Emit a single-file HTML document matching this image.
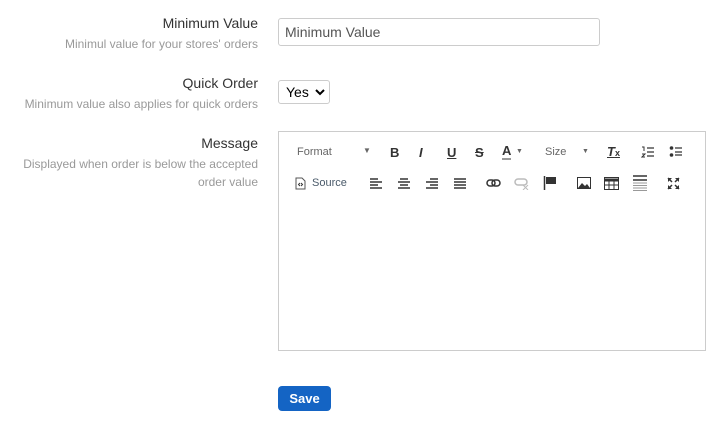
<!DOCTYPE html>
<html><head><style>
body{margin:0;background:#fff;font-family:"Liberation Sans",Arial,sans-serif;width:721px;height:432px;position:relative;overflow:hidden}
.a{position:absolute}
.t{right:463px;text-align:right;font-size:14px;color:#333;white-space:nowrap}
.d{right:463px;text-align:right;font-size:12px;color:#999;line-height:18px}
.i{color:#333;font-size:13px;font-weight:bold}
.g{color:#666;font-size:11px}
</style></head><body>
<div class="a t" style="top:15px">Minimum Value</div>
<div class="a d" style="top:35px;white-space:nowrap">Minimul value for your stores' orders</div>
<div class="a" style="left:278px;top:18px;width:322px;height:28px;border:1px solid #ccc;border-radius:3px;box-sizing:border-box;font-size:14px;color:#555;padding:5px 6px">Minimum Value</div>

<div class="a t" style="top:75px">Quick Order</div>
<div class="a d" style="top:95px;white-space:nowrap">Minimum value also applies for quick orders</div>
<div class="a" style="left:278px;top:80px;width:52px;height:24px;border:1px solid #ccc;border-radius:3px;box-sizing:border-box;font-size:14px;color:#000;padding:3px 0 0 7px;white-space:nowrap">Yes</div>
<svg class="a" style="left:315px;top:88px" width="10" height="8" viewBox="0 0 10 8"><path d="M1 2l4 4 4-4" stroke="#000" stroke-width="2" fill="none"/></svg>

<div class="a t" style="top:135px">Message</div>
<div class="a d" style="top:155px;width:240px">Displayed when order is below the accepted order value</div>
<div class="a" style="left:278px;top:131px;width:428px;height:220px;border:1px solid #ccc;box-sizing:border-box"></div>

<div class="a g" style="left:297px;top:146px">Format</div>
<div class="a g" style="left:363px;top:146px;font-size:8px">▼</div>
<div class="a i" style="left:390px;top:145px">B</div>
<div class="a i" style="left:419px;top:145px;font-style:italic">I</div>
<div class="a i" style="left:447px;top:145px;text-decoration:underline">U</div>
<div class="a i" style="left:475px;top:145px;text-decoration:line-through">S</div>
<div class="a i" style="left:502px;top:144px;border-bottom:2px solid #999;line-height:14px">A</div>
<div class="a g" style="left:516px;top:148px;font-size:7px">▼</div>
<div class="a g" style="left:545px;top:146px">Size</div>
<div class="a g" style="left:582px;top:148px;font-size:7px">▼</div>
<div class="a i" style="left:607px;top:144px;font-style:italic;text-decoration:underline">T<span style="font-size:9px;font-style:normal">x</span></div>
<svg class="a" style="left:641px;top:145px" width="14" height="14"><path d="M1 2h2v4M1 9h3l-3 3h3" stroke="#333" fill="none"/><path d="M6 3h7M6 7h7M6 11h7" stroke="#333" stroke-width="1.3"/></svg>
<svg class="a" style="left:669px;top:145px" width="14" height="14"><circle cx="2.5" cy="3" r="1.8" fill="#333"/><circle cx="2.5" cy="10" r="1.8" fill="#333"/><path d="M6 3h7M6 7h7M6 10h7" stroke="#333" stroke-width="1.3"/></svg>

<svg class="a" style="left:295px;top:177px" width="11" height="13"><path d="M1 1h6l3 3v8H1z" fill="none" stroke="#555"/><path d="M5 6l-1.5 1.5L5 9M6 6l1.5 1.5L6 9" stroke="#333" fill="none"/></svg>
<div class="a" style="left:312px;top:177px;font-size:11px;color:#4a5a6a">Source</div>
<svg class="a" style="left:369px;top:177px" width="14" height="12"><path d="M1 2h8M1 5h12M1 8h8M1 11h12" stroke="#333" stroke-width="1.4"/></svg>
<svg class="a" style="left:397px;top:177px" width="14" height="12"><path d="M3 2h8M1 5h12M3 8h8M1 11h12" stroke="#333" stroke-width="1.4"/></svg>
<svg class="a" style="left:425px;top:177px" width="14" height="12"><path d="M5 2h8M1 5h12M5 8h8M1 11h12" stroke="#333" stroke-width="1.4"/></svg>
<svg class="a" style="left:453px;top:177px" width="14" height="12"><path d="M1 2h12M1 5h12M1 8h12M1 11h12" stroke="#333" stroke-width="1.4"/></svg>
<svg class="a" style="left:486px;top:178px" width="16" height="10"><rect x="1" y="2" width="8" height="6" rx="3" fill="none" stroke="#333" stroke-width="1.5"/><rect x="6" y="2" width="8" height="6" rx="3" fill="none" stroke="#333" stroke-width="1.5"/></svg>
<svg class="a" style="left:514px;top:178px" width="16" height="12"><rect x="1" y="1" width="12" height="6" rx="3" fill="none" stroke="#bbb" stroke-width="1.5"/><path d="M9 7l5 5M14 7l-5 5" stroke="#bbb"/></svg>
<svg class="a" style="left:543px;top:176px" width="14" height="14"><path d="M1.5 0v14" stroke="#333" stroke-width="1.5"/><path d="M3 1h10v7H3z" fill="#333"/></svg>
<svg class="a" style="left:577px;top:177px" width="14" height="12"><rect x="0.5" y="0.5" width="13" height="11" fill="none" stroke="#333"/><path d="M1 11l4-5 3 3 2-2 3 4z" fill="#333"/></svg>
<svg class="a" style="left:604px;top:177px" width="15" height="13"><rect x="0.5" y="0.5" width="14" height="12" fill="none" stroke="#333"/><path d="M0 3h15" stroke="#333" stroke-width="3"/><path d="M5 3v10M10 3v10M0 8h15" stroke="#333"/></svg>
<svg class="a" style="left:633px;top:175px" width="14" height="16"><path d="M0 1h14M0 5h14" stroke="#333" stroke-width="1.5"/><path d="M0 8h14M0 10.5h14M0 13h14M0 15.5h14" stroke="#999"/></svg>
<svg class="a" style="left:667px;top:177px" width="13" height="13"><path d="M1 1h4L1 5zM12 1H8l4 4zM1 12h4L1 8zM12 12H8l4-4z" fill="#333"/><path d="M1 1l4 4M12 1L8 5M1 12l4-4M12 12L8 8" stroke="#333" stroke-width="1.5"/></svg>

<div class="a" style="left:278px;top:386px;width:53px;height:25px;background:#1464c4;border-radius:4px;color:#fff;font-size:13px;font-weight:bold;text-align:center;line-height:25px">Save</div>
</body></html>
